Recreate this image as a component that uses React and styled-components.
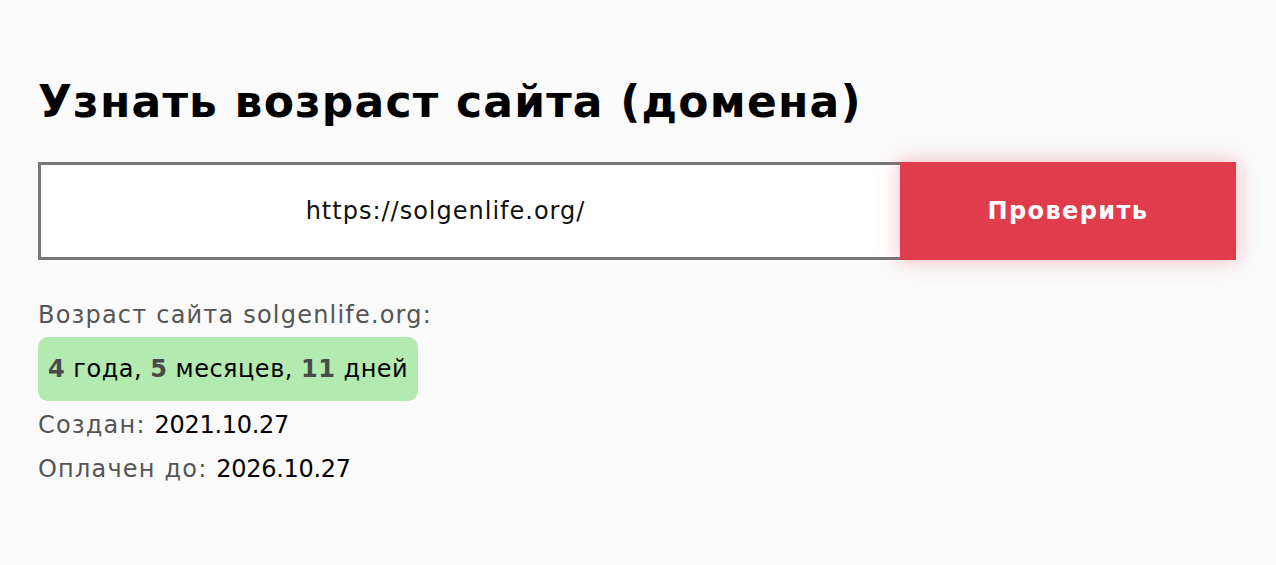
import styled, { createGlobalStyle } from 'styled-components';

const Global = createGlobalStyle`
  html, body { margin: 0; padding: 0; background: #fafafa; }
  body { font-family: "DejaVu Sans", "Noto Sans", sans-serif; }
`;

const Page = styled.main`
  padding: 72px 40px 60px 38px;
  min-height: 565px;
  box-sizing: border-box;
`;

const Title = styled.h1`
  margin: 0 0 30px;
  font-size: 44px;
  line-height: 60px;
  font-weight: 700;
  color: #000;
  letter-spacing: 1.2px;
`;

const Form = styled.form`
  display: flex;
  height: 98px;
`;

const UrlInput = styled.input`
  flex: 1;
  box-sizing: border-box;
  height: 100%;
  border: 3px solid #777;
  border-right: none;
  background: #fff;
  font-family: inherit;
  font-size: 24px;
  letter-spacing: 1px;
  color: #111;
  text-align: center;
  padding: 0 50px 0 0;
  outline: none;
`;

const Button = styled.button`
  width: 336px;
  height: 100%;
  border: none;
  background: #e03c4b;
  color: #fff;
  font-family: inherit;
  font-size: 24px;
  letter-spacing: 1.4px;
  font-weight: 700;
  box-shadow: 0 0 20px rgba(224, 60, 75, 0.35);
  cursor: pointer;
`;

const Result = styled.section`
  margin-top: 33px;
  display: flex;
  flex-direction: column;
  align-items: flex-start;
  font-size: 24px;
  letter-spacing: 1.2px;
  color: #555;
`;

const Line = styled.div`
  line-height: 44px;
`;

const Value = styled.span`
  color: #000;
  letter-spacing: -0.3px;
`;

const Badge = styled.div`
  background: #b3eaaf;
  border-radius: 10px;
  padding: 0 10px;
  height: 64px;
  margin-bottom: 2px;
  display: flex;
  align-items: center;
  font-size: 24px;
  letter-spacing: 0.5px;
  color: #000;
`;

const Num = styled.b`
  color: #4a4a4a;
  font-weight: 700;
`;

export default function App() {
  return (
    <>
      <Global />
      <Page>
        <Title>Узнать возраст сайта (домена)</Title>
        <Form onSubmit={(e) => e.preventDefault()}>
          <UrlInput defaultValue="https://solgenlife.org/" />
          <Button type="submit">Проверить</Button>
        </Form>
        <Result>
          <Line>Возраст сайта solgenlife.org:</Line>
          <Badge>
            <span>
              <Num>4</Num> года, <Num>5</Num> месяцев, <Num>11</Num> дней
            </span>
          </Badge>
          <Line>
            Создан: <Value>2021.10.27</Value>
          </Line>
          <Line>
            Оплачен до: <Value>2026.10.27</Value>
          </Line>
        </Result>
      </Page>
    </>
  );
}
